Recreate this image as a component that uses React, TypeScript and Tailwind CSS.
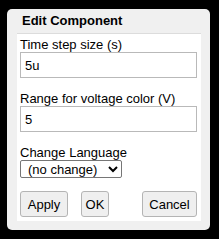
export default function App() {
  return (
    <div className="w-[219px] h-[239px] bg-black pt-[9px] pl-[7px] font-['Liberation_Sans',Arial,sans-serif] text-[13px] leading-[15px] text-black">
      <div className="w-[203px] h-[221px] rounded-[5px] bg-[#f0f0f0] flex flex-col">
        <div className="h-[24px] pt-[4px] pl-[15px] font-bold">Edit Component</div>
        <div className="flex-1 ml-[10px] mr-[9px] mb-[9px] bg-white border-t border-[#dcdcdc] pt-[3px] pl-[3px] pr-[4px] flex flex-col">
          <label>Time step size (s)</label>
          <input
            defaultValue="5u"
            className="h-[26px] w-full border border-[#b9b9b9] px-[4px] bg-white outline-none"
          />
          <label className="mt-[13px]">Range for voltage color (V)</label>
          <input
            defaultValue="5"
            className="h-[26px] w-full border border-[#b9b9b9] px-[4px] bg-white outline-none"
          />
          <label className="mt-[13px]">Change Language</label>
          <select className="h-[18px] w-[102px] border border-[#767676] rounded-[2px] bg-white pl-[3px] text-[13px] leading-[15px]">
            <option>(no change)</option>
          </select>
          <div className="mt-[13px] flex">
            <button className="h-[26px] w-[48px] rounded-[3px] border border-[#b4b4b4] bg-[#efefef]">Apply</button>
            <button className="ml-[13px] h-[26px] w-[28px] rounded-[3px] border border-[#b4b4b4] bg-[#efefef]">OK</button>
            <button className="ml-auto h-[26px] w-[55px] rounded-[3px] border border-[#b4b4b4] bg-[#efefef]">Cancel</button>
          </div>
        </div>
      </div>
    </div>
  );
}
